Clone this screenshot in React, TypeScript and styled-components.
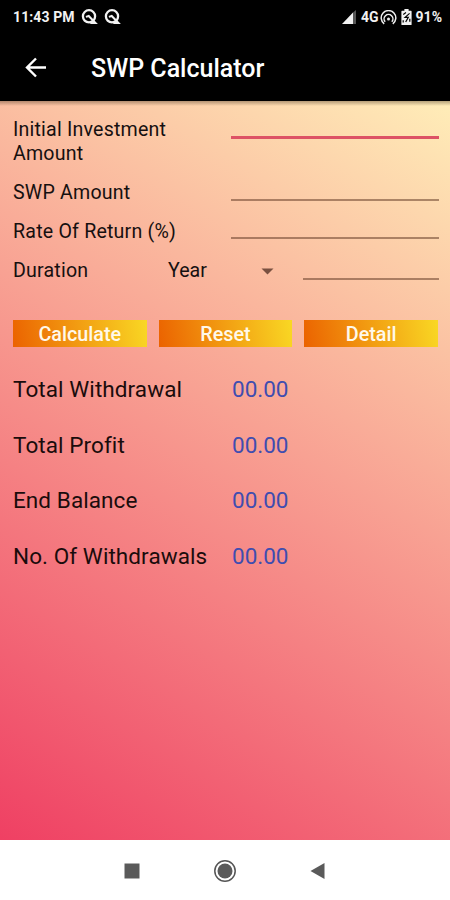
import React from "react";
import styled, { createGlobalStyle } from "styled-components";

const GlobalStyle = createGlobalStyle`
  * { box-sizing: border-box; }
  body { margin: 0; background: #000; font-family: Roboto, sans-serif; }
`;

const Screen = styled.div`
  width: 450px;
  height: 900px;
  display: flex;
  flex-direction: column;
  overflow: hidden;
`;

const StatusBar = styled.div`
  height: 34px;
  flex: none;
  background: #000;
  color: #f2f2f2;
  display: flex;
  align-items: center;
  justify-content: space-between;
  padding: 0 8px 0 13px;
  font-weight: 700;
  font-size: 14px;
  line-height: 16px;
`;

const StatusGroup = styled.div<{ $gap: number }>`
  display: flex;
  align-items: center;
  gap: ${(p) => p.$gap}px;
  svg { display: block; flex: none; }
`;

const StatusText = styled.span<{ $spacing?: number }>`
  letter-spacing: ${(p) => p.$spacing ?? 0}px;
  white-space: nowrap;
`;

const AppBar = styled.header`
  height: 67px;
  flex: none;
  background: #000;
  display: flex;
  align-items: center;
  padding-left: 24px;
  gap: 43px;
  color: #fff;
  svg { display: block; }
`;

const Title = styled.h1`
  margin: 2px 0 0;
  font-size: 25px;
  line-height: 30px;
  font-weight: 500;
  white-space: nowrap;
`;

const Content = styled.main`
  height: 739px;
  flex: none;
  background:
    linear-gradient(to bottom, rgba(70, 50, 30, 0.4), rgba(70, 50, 30, 0) 5px),
    linear-gradient(31.3deg, #ef4063, #ffedb8);
  padding: 16px 11px 0 13px;
`;

const Field = styled.div<{ $height: number }>`
  height: ${(p) => p.$height}px;
  display: flex;
  align-items: flex-start;
  justify-content: space-between;
`;

const Label = styled.label`
  width: 170px;
  padding-top: 1px;
  font-size: 19.6px;
  line-height: 24px;
  letter-spacing: 0.2px;
  color: #161010;
`;

const Input = styled.input<{ $drop: number; $width?: number; $active?: boolean }>`
  width: ${(p) => p.$width ?? 208}px;
  height: ${(p) => p.$drop}px;
  padding: 0;
  border: 0;
  border-radius: 0;
  outline: 0;
  background: transparent;
  font: 19px Roboto, sans-serif;
  border-bottom: ${(p) => (p.$active ? "3px solid #dd5265" : "2px solid rgba(90, 50, 30, 0.5)")};
`;

const UnitSelect = styled.div`
  width: 106px;
  height: 24px;
  margin-right: 29px;
  display: flex;
  align-items: center;
  justify-content: space-between;
  font-size: 19.6px;
  line-height: 24px;
  color: #161010;
`;

const DurationLabel = styled(Label)`
  width: 155px;
  padding-top: 0;
`;

const Buttons = styled.div`
  display: grid;
  grid-template-columns: repeat(3, 133.6px);
  justify-content: space-between;
  width: 425px;
  margin-top: 5px;
`;

const Button = styled.button`
  height: 27px;
  padding: 3px 0 0;
  border: 0;
  background: linear-gradient(78.6deg, #eb6200, #f9d824);
  color: #fff8ea;
  font: 500 19.8px/24px Roboto, sans-serif;
`;

const Results = styled.dl`
  margin: 28px 0 0;
`;

const Result = styled.div`
  display: flex;
  height: 55.7px;
  font-size: 22.5px;
  line-height: 28px;
`;

const ResultName = styled.dt`
  width: 219px;
  letter-spacing: 0.08px;
  color: #1a0c0c;
  white-space: nowrap;
`;

const ResultValue = styled.dd`
  margin: 0;
  color: #3f4db0;
`;

const NavBar = styled.nav`
  flex: 1;
  background: #fff;
  display: flex;
  align-items: center;
  justify-content: center;
  gap: 73px;
  padding-top: 2px;
  svg { display: block; }
`;

const QIcon = () => (
  <svg width="17" height="16" viewBox="0 0 17 16" fill="none" stroke="#f2f2f2" strokeWidth="2.3">
    <circle cx="8" cy="7.3" r="6.1" />
    <path d="M4.9 7.9 7.7 7 14.5 14H9.3" strokeWidth="2" />
  </svg>
);

const SignalIcon = () => (
  <svg width="15" height="15" viewBox="0 0 15 15">
    <path d="M0 14 11 2.5v11.5z" fill="#f2f2f2" />
    <path d="M11 2.5 14 0v14h-3z" fill="#555" />
  </svg>
);

const HotspotIcon = () => (
  <svg width="17" height="15" viewBox="0 0 17 15" fill="none" stroke="#eee" strokeWidth="1.5">
    <path d="M4.2 13.8a7.3 7.3 0 1 1 8.6 0" />
    <path d="M5.2 11.8a4.4 4.4 0 1 1 6.6 0" />
    <circle cx="8.5" cy="9" r="1.5" fill="#eee" stroke="none" />
  </svg>
);

const BatteryIcon = () => (
  <svg width="11" height="16" viewBox="0 0 11 16">
    <path d="M3.4 0h4.2v1.8H10q.6 0 .6.6v13q0 .6-.6.6H1q-.6 0-.6-.6v-13q0-.6.6-.6h2.4z" fill="#f2f2f2" />
    <path d="M2.3 5.4 5 3.6M8.6 4.4 4.1 8.3h3.2L4.7 13M2.2 11.2v2.4M8.8 9.8v3" fill="none" stroke="#000" strokeWidth="1.2" />
  </svg>
);

const BackArrow = () => (
  <svg width="24" height="22" viewBox="0 0 24 22" fill="none" stroke="#fff" strokeWidth="2.4">
    <path d="M22 10.5H3.5M12 1.5l-9 9 9 9" />
  </svg>
);

const results = ["Total Withdrawal", "Total Profit", "End Balance", "No. Of Withdrawals"];

export default function App() {
  return (
    <Screen>
      <GlobalStyle />
      <StatusBar>
        <StatusGroup $gap={6}>
          <StatusText $spacing={0.1}>11:43 PM</StatusText>
          <QIcon />
          <QIcon />
        </StatusGroup>
        <StatusGroup $gap={4}>
          <SignalIcon />
          <StatusGroup $gap={1}>
            <StatusText>4G</StatusText>
            <HotspotIcon />
          </StatusGroup>
          <BatteryIcon />
          <StatusText>91%</StatusText>
        </StatusGroup>
      </StatusBar>
      <AppBar>
        <BackArrow />
        <Title>SWP Calculator</Title>
      </AppBar>
      <Content>
        <Field $height={63}>
          <Label htmlFor="initial">Initial Investment Amount</Label>
          <Input id="initial" $drop={22} $active />
        </Field>
        <Field $height={39}>
          <Label htmlFor="swp">SWP Amount</Label>
          <Input id="swp" $drop={21} />
        </Field>
        <Field $height={40}>
          <Label htmlFor="rate">Rate Of Return (%)</Label>
          <Input id="rate" $drop={20} />
        </Field>
        <Field $height={56}>
          <DurationLabel htmlFor="duration">Duration</DurationLabel>
          <UnitSelect>
            Year
            <svg width="13" height="7" viewBox="0 0 13 7">
              <path d="M.5.5h12l-6 6z" fill="#795040" />
            </svg>
          </UnitSelect>
          <Input id="duration" $drop={21} $width={136} />
        </Field>
        <Buttons>
          <Button>Calculate</Button>
          <Button>Reset</Button>
          <Button>Detail</Button>
        </Buttons>
        <Results>
          {results.map((name) => (
            <Result key={name}>
              <ResultName>{name}</ResultName>
              <ResultValue>00.00</ResultValue>
            </Result>
          ))}
        </Results>
      </Content>
      <NavBar>
        <svg width="16" height="16" viewBox="0 0 16 16">
          <path d="M.5.5h15v15H.5z" fill="#5a5a5a" />
        </svg>
        <svg width="24" height="24" viewBox="0 0 24 24">
          <circle cx="12" cy="12" r="10.2" fill="none" stroke="#555" strokeWidth="1.5" />
          <circle cx="12" cy="12" r="7.5" fill="#5a5a5a" />
        </svg>
        <svg width="16" height="18" viewBox="0 0 16 18">
          <path d="M14.5 1v16L.5 9z" fill="#5a5a5a" />
        </svg>
      </NavBar>
    </Screen>
  );
}
